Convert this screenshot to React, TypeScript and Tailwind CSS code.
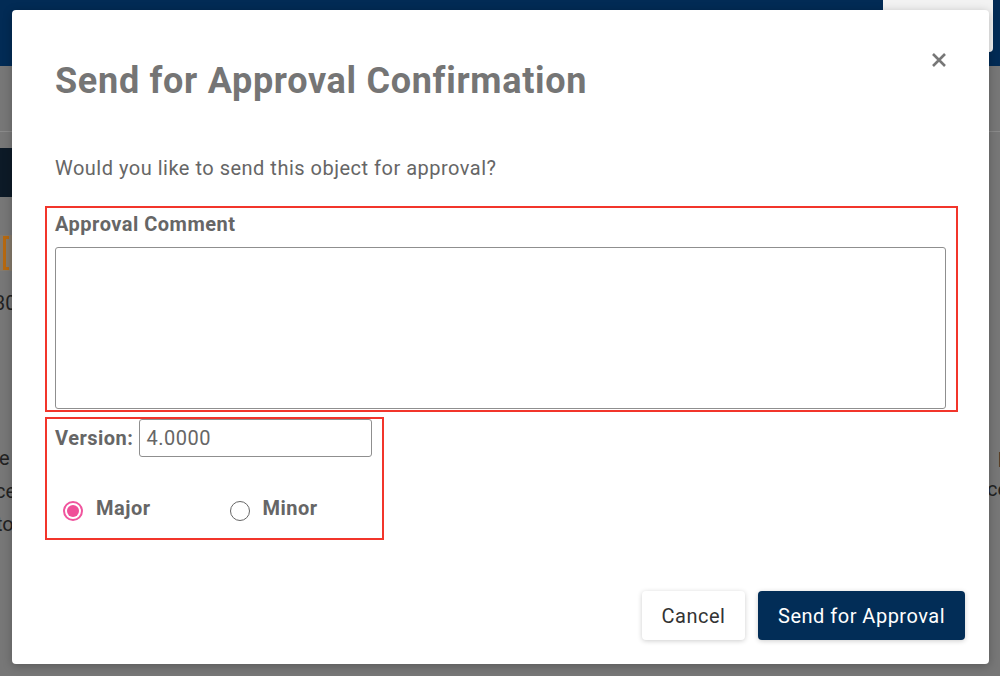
import React, { useState } from 'react';

const App: React.FC = () => {
  const [comment, setComment] = useState('');
  const [version, setVersion] = useState('4.0000');
  const [kind, setKind] = useState<'major' | 'minor'>('major');

  return (
    <div className="relative h-[676px] w-[1000px] overflow-hidden font-['Roboto',sans-serif] bg-[#777777]">
      {/* page behind the dialog */}
      <div className="flex h-[66px] justify-end bg-[#022b55] pr-[7px]">
        <div className="h-[52px] w-[110px] rounded-b bg-[#f2f2f2]" />
      </div>
      <div className="h-[66px] border-b border-[#8a8a8a]" />
      <div className="flex justify-between">
        <div className="w-[12px] overflow-hidden">
          <div className="mt-[16px] h-[49px] w-[12px] bg-[#0d1a27]" />
          <div className="mt-[38px] flex h-[36px] w-[12px] items-center bg-[#857a6c] pl-[3px]">
            <div className="h-[34px] w-[6px] border-y-[3px] border-l-[3px] border-[#b8690f]" />
          </div>
          <div className="mt-[20px] -ml-[6px] text-[20px] leading-[24px] text-[#222]">30</div>
          <div className="mt-[127px] -ml-[1px] text-[20px] leading-[33px] text-[#222]">e</div>
          <div className="-ml-[5px] text-[20px] leading-[33px] text-[#222]">ce</div>
          <div className="-ml-[4px] text-[20px] leading-[33px] text-[#222]">to</div>
        </div>
        <div className="w-[11px] overflow-hidden">
          <div className="mt-[308px] ml-[9px] text-[20px] leading-[33px] text-[#222]">p</div>
          <div className="-ml-[2px] text-[20px] leading-[33px] text-[#222]">ce</div>
        </div>
      </div>

      {/* dialog */}
      <div className="absolute left-[12px] top-[10px] flex h-[654px] w-[977px] flex-col rounded-[4px] bg-white shadow-[0_2px_10px_rgba(0,0,0,0.25)]">
        <div className="flex items-start justify-between pl-[43px] pr-[41px] pt-[50px]">
          <h2 className="text-[36px] font-bold leading-[42px] tracking-[0.7px] text-[#757575]">
            Send for Approval Confirmation
          </h2>
          <button className="-mt-[9px] p-[2px] text-[#777]" aria-label="Close">
            <svg width="14" height="14" viewBox="0 0 14 14" stroke="currentColor" strokeWidth="2.6" strokeLinecap="butt">
              <path d="M1 1 L13 13 M13 1 L1 13" />
            </svg>
          </button>
        </div>

        <p className="ml-[43px] mt-[54px] text-[20px] leading-[24px] tracking-[0.5px] text-[#666]">
          Would you like to send this object for approval?
        </p>

        <div className="ml-[33px] mt-[26px] w-[913px] border-2 border-[#f2352b] pb-[1px] pl-[8px] pr-[10px] pt-[4px]">
          <label className="block text-[20px] font-bold leading-[24px] tracking-[0.5px] text-[#666]">Approval Comment</label>
          <textarea
            value={comment}
            onChange={(e) => setComment(e.target.value)}
            className="mt-[11px] block h-[162px] w-full resize-none rounded-[3px] border border-[#8f8f8f] p-2 text-[20px] text-[#555] outline-none"
          />
        </div>

        <div className="ml-[33px] mt-[5px] w-[339px] border-2 border-[#f2352b] pl-[8px] pb-[17px]">
          <div className="flex items-center">
            <label className="text-[20px] font-bold leading-[24px] tracking-[0.5px] text-[#666]">Version:</label>
            <input
              value={version}
              onChange={(e) => setVersion(e.target.value)}
              className="ml-[6px] h-[38px] w-[233px] rounded-[3px] border border-[#8f8f8f] px-[6px] text-[20px] tracking-[0.5px] text-[#666] outline-none"
            />
          </div>
          <div className="mt-[39px] flex items-start">
            <button onClick={() => setKind('major')} className="flex items-start">
              <span className={`ml-[8px] mt-[5px] flex h-[20px] w-[20px] items-center justify-center rounded-full border-2 ${kind === 'major' ? 'border-[#f0559e]' : 'border-[#666]'}`}>
                {kind === 'major' && <span className="h-[12px] w-[12px] rounded-full bg-[#ef4f99]" />}
              </span>
              <span className="ml-[13px] text-[20px] font-bold leading-[24px] tracking-[0.5px] text-[#666]">Major</span>
            </button>
            <button onClick={() => setKind('minor')} className="ml-[79px] flex items-start">
              <span className={`mt-[5px] flex h-[20px] w-[20px] items-center justify-center rounded-full border-[1.5px] ${kind === 'minor' ? 'border-[#f0559e]' : 'border-[#666]'}`}>
                {kind === 'minor' && <span className="h-[12px] w-[12px] rounded-full bg-[#ef4f99]" />}
              </span>
              <span className="ml-[13px] text-[20px] font-bold leading-[24px] tracking-[0.5px] text-[#666]">Minor</span>
            </button>
          </div>
        </div>

        <div className="mt-auto mb-[24px] flex justify-end gap-[13px] pr-[24px]">
          <button className="h-[49px] w-[103px] rounded-[4px] bg-white text-[20px] tracking-[0.5px] text-[#333] shadow-[0_1px_5px_rgba(0,0,0,0.2)]">
            Cancel
          </button>
          <button className="h-[49px] w-[207px] rounded-[4px] bg-[#022d57] text-[20px] tracking-[0.5px] text-white shadow-[0_1px_5px_rgba(0,0,0,0.2)]">
            Send for Approval
          </button>
        </div>
      </div>
    </div>
  );
};

export default App;
